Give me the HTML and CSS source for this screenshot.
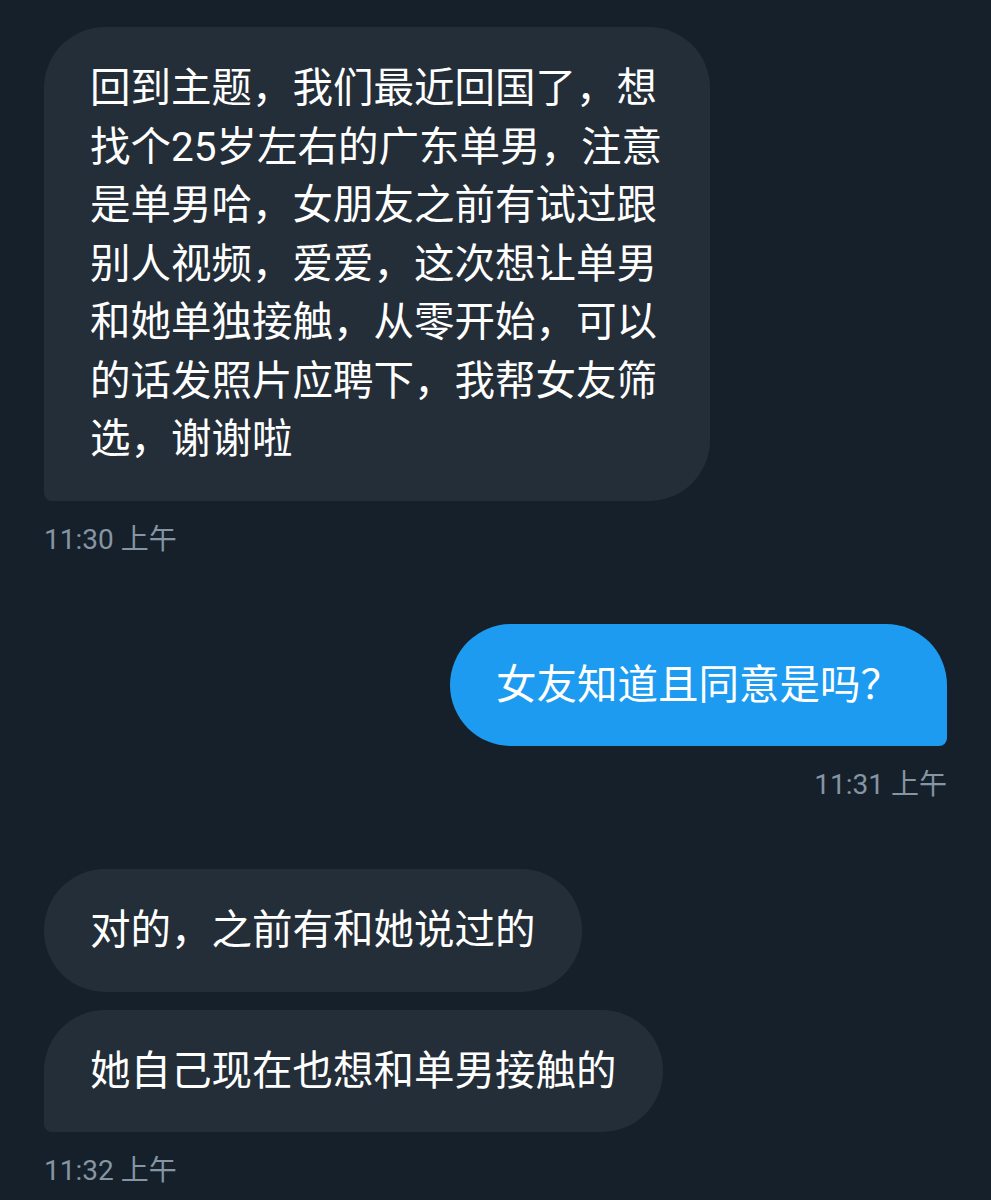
FILE: index.html
```html
<!DOCTYPE html>
<html lang="zh-CN">
<head>
    <meta charset="UTF-8">
    <meta name="viewport" content="width=device-width, initial-scale=1.0">
    <title>私信</title>
    <link rel="stylesheet" href="styles.css">
</head>
<body>

<section class="conversation">

    <div class="group received">
        <p class="bubble last">回到主题，我们最近回国了，想找个25岁左右的广东单男，注意是单男哈，女朋友之前有试过跟别人视频，爱爱，这次想让单男和她单独接触，从零开始，可以的话发照片应聘下，我帮女友筛选，谢谢啦</p>
        <span class="time">11:30 上午</span>
    </div>

    <div class="group sent">
        <p class="bubble last">女友知道且同意是吗？</p>
        <span class="time">11:31 上午</span>
    </div>

    <div class="group received">
        <p class="bubble">对的，之前有和她说过的</p>
        <p class="bubble last">她自己现在也想和单男接触的</p>
        <span class="time">11:32 上午</span>
    </div>

</section>

</body>
</html>
```

FILE: styles.css
```css
:root{
    --bg: #16202a;
    --bubble-in: #242e38;
    --bubble-out: #1d9bf0;
    --time-color: #8595a3;
}

*{
    padding: 0;
    margin: 0;
    box-sizing: border-box;
}

body{
    background: var(--bg);
    font-family: Roboto, "Noto Sans CJK SC", sans-serif;
    color: #fff;
}

.conversation{
    display: flex;
    flex-direction: column;
    gap: 66px;
    padding: 27px 44px 40px;
}

.group{
    display: flex;
    flex-direction: column;
    gap: 18px;
}

.received{
    align-items: flex-start;
}

.sent{
    align-items: flex-end;
}

.bubble{
    max-width: 666px;
    padding: 32px 46px;
    font-size: 40.5px;
    line-height: 58.5px;
    border-radius: 61px;
    background: var(--bubble-in);
}

.sent .bubble{
    background: var(--bubble-out);
}

.received .bubble.last{
    border-bottom-left-radius: 8px;
}

.sent .bubble.last{
    border-bottom-right-radius: 8px;
}

.time{
    margin-top: 3px;
    font-size: 28px;
    line-height: 36px;
    color: var(--time-color);
}
```
